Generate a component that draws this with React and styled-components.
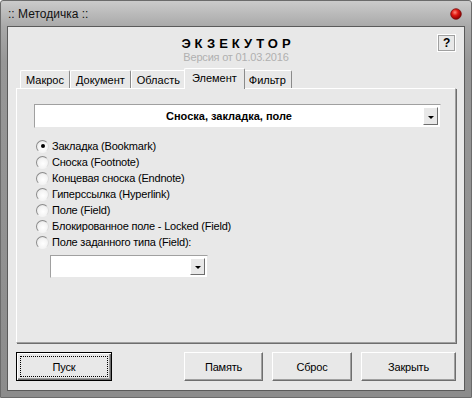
import React from 'react';
import styled, { createGlobalStyle } from 'styled-components';

const GlobalStyle = createGlobalStyle`
  html, body {
    margin: 0;
    padding: 0;
    background: #ffffff;
  }
  body {
    font-family: "Liberation Sans", Arial, sans-serif;
    font-size: 11px;
    letter-spacing: -0.2px;
    color: #000;
  }
`;

const Window = styled.div`
  width: 472px;
  height: 398px;
  box-sizing: border-box;
  border: 1px solid #6b6b6b;
  border-radius: 3px 3px 0 0;
  padding: 0 6px 6px 6px;
  background: linear-gradient(#cbcbcb 0px, #a8a8a8 26px, #979797 60px, #8c8c8c 100%);
  display: flex;
  flex-direction: column;
`;

const TitleBar = styled.div`
  height: 25px;
  display: flex;
  align-items: center;
  justify-content: space-between;
  padding: 0 3px 0 1px;
  font-size: 12px;
  letter-spacing: 0;
  color: #111;
`;

const CloseDot = () => (
  <svg width="12" height="12" viewBox="0 0 12 12">
    <defs>
      <radialGradient id="rd" cx="40%" cy="35%" r="65%">
        <stop offset="0%" stopColor="#ff8a7a" />
        <stop offset="45%" stopColor="#e01810" />
        <stop offset="100%" stopColor="#8a0000" />
      </radialGradient>
    </defs>
    <circle cx="6" cy="6" r="5.3" fill="url(#rd)" stroke="#7a1010" strokeWidth="0.8" />
  </svg>
);

const Client = styled.div`
  flex: 1;
  background: #e8e8e8;
  border: 1px solid #5a5a5a;
  padding: 0 8px 9px 8px;
  display: flex;
  flex-direction: column;
`;

const Header = styled.div`
  height: 39px;
  box-sizing: border-box;
  padding-top: 7px;
  display: grid;
  grid-template-columns: 19px 1fr 19px;
  align-items: start;
`;

const Brand = styled.div`
  grid-column: 2;
  margin-top: 2px;
  text-align: center;
`;

const BrandName = styled.div`
  font-size: 13px;
  font-weight: bold;
  line-height: 15px;
  letter-spacing: 4px;
  text-indent: 4px;
  color: #000;
`;

const Version = styled.div`
  font-size: 11px;
  line-height: 12px;
  color: #b0b0b0;
`;

const HelpButton = styled.div`
  grid-column: 3;
  width: 19px;
  height: 18px;
  box-sizing: border-box;
  border: 1px solid #ffffff;
  outline: 1px solid #a0a0a0;
  outline-offset: -2px;
  display: flex;
  align-items: center;
  justify-content: center;
  font-weight: bold;
  font-size: 12px;
  color: #000;
`;

const TabStrip = styled.div`
  height: 22px;
  display: flex;
  align-items: flex-end;
  padding-left: 4px;
  position: relative;
  z-index: 1;
`;

const Tab = styled.div`
  height: ${p => (p.$active ? '21px' : '18px')};
  box-sizing: border-box;
  padding: 0 ${p => (p.$active ? '7px' : '5px')};
  margin: 0 ${p => (p.$active ? '-2px' : '0')} ${p => (p.$active ? '-1px' : '0')};
  border-top: 1px solid #ffffff;
  border-left: 1px solid #ffffff;
  border-right: 1px solid #8a8a8a;
  border-radius: 2px 2px 0 0;
  background: #e8e8e8;
  letter-spacing: 0;
  display: flex;
  align-items: ${p => (p.$active ? 'flex-start' : 'center')};
  padding-top: ${p => (p.$active ? '3px' : '0')};
  position: relative;
  z-index: ${p => (p.$active ? 2 : 0)};
  white-space: nowrap;
`;

const Panel = styled.div`
  flex: 1;
  border-top: 1px solid #ffffff;
  border-left: 1px solid #ffffff;
  border-right: 1px solid #a0a0a0;
  border-bottom: 1px solid #a0a0a0;
  box-shadow: 1px 1px 0 #6e6e6e;
  padding: 15px 13px 0 17px;
  display: flex;
  flex-direction: column;
`;

const Combo = styled.div`
  width: ${p => p.$width};
  height: ${p => p.$height};
  box-sizing: border-box;
  background: #ffffff;
  border: 1px solid;
  border-color: #a0a0a0 #e8e8e8 #e8e8e8 #a0a0a0;
  padding: 1px;
  display: flex;
  align-items: stretch;
`;

const ComboText = styled.div`
  flex: 1;
  display: flex;
  align-items: center;
  justify-content: center;
  font-weight: bold;
  font-size: 11px;
  letter-spacing: 0;
`;

const DropButton = styled.div`
  width: 15px;
  box-sizing: border-box;
  margin: 1px;
  background: #e8e8e8;
  border: 1px solid;
  border-color: #ffffff #6e6e6e #6e6e6e #ffffff;
  display: flex;
  align-items: center;
  justify-content: center;
`;

const Arrow = styled.span`
  width: 0;
  height: 0;
  margin-top: 2px;
  border-left: 3px solid transparent;
  border-right: 3px solid transparent;
  border-top: 3px solid #000;
`;

const RadioList = styled.div`
  margin-top: 10px;
  padding-left: 2px;
  display: flex;
  flex-direction: column;
`;

const RadioRow = styled.div`
  height: 16px;
  display: flex;
  align-items: center;
  gap: 3px;
`;

const RadioCircle = styled.span`
  width: 13px;
  height: 13px;
  box-sizing: border-box;
  border-radius: 50%;
  border: 1px solid;
  border-color: #8a8a8a #dcdcdc #f4f4f4 #8a8a8a;
  background: radial-gradient(circle at 55% 60%, #ffffff 0%, #f3f3f3 55%, #d8d8d8 100%);
  display: flex;
  align-items: center;
  justify-content: center;
  &::after {
    content: '';
    width: 4px;
    height: 4px;
    border-radius: 50%;
    background: ${p => (p.$checked ? '#000' : 'transparent')};
  }
`;

const SubCombo = styled.div`
  margin-top: 5px;
  margin-left: 16px;
`;

const ButtonRow = styled.div`
  margin-top: 9px;
  height: 29px;
  display: flex;
  gap: 9px;
`;

const Button = styled.div`
  width: ${p => p.$width}px;
  box-sizing: border-box;
  background: #e8e8e8;
  border: 1px solid;
  border-color: #ffffff #6e6e6e #6e6e6e #ffffff;
  box-shadow: inset -1px -1px 0 #a0a0a0;
  display: flex;
  align-items: center;
  justify-content: center;
  margin-left: ${p => (p.$push ? 'auto' : '0')};
`;

const DefaultButton = styled(Button)`
  border: 1px solid #000;
  box-shadow: inset 1px 1px 0 #ffffff, inset -1px -1px 0 #6e6e6e, inset -2px -2px 0 #a0a0a0;
  padding: 3px;
`;

const FocusRect = styled.div`
  flex: 1;
  align-self: stretch;
  border: 1px dotted #000;
  display: flex;
  align-items: center;
  justify-content: center;
`;

const tabs = ['Макрос', 'Документ', 'Область', 'Элемент', 'Фильтр'];

const options = [
  'Закладка (Bookmark)',
  'Сноска (Footnote)',
  'Концевая сноска (Endnote)',
  'Гиперссылка (Hyperlink)',
  'Поле (Field)',
  'Блокированное поле - Locked (Field)',
  'Поле заданного типа (Field):',
];

export default function App() {
  return (
    <>
      <GlobalStyle />
      <Window>
        <TitleBar>
          <span>:: Методичка ::</span>
          <CloseDot />
        </TitleBar>
        <Client>
          <Header>
            <Brand>
              <BrandName>ЭКЗЕКУТОР</BrandName>
              <Version>Версия от 01.03.2016</Version>
            </Brand>
            <HelpButton>?</HelpButton>
          </Header>
          <TabStrip>
            {tabs.map(t => (
              <Tab key={t} $active={t === 'Элемент'}>{t}</Tab>
            ))}
          </TabStrip>
          <Panel>
            <Combo $width="407px" $height="24px">
              <ComboText>Сноска, закладка, поле</ComboText>
              <DropButton><Arrow /></DropButton>
            </Combo>
            <RadioList>
              {options.map((o, i) => (
                <RadioRow key={o}>
                  <RadioCircle $checked={i === 0} />
                  <span>{o}</span>
                </RadioRow>
              ))}
            </RadioList>
            <SubCombo>
              <Combo $width="158px" $height="23px">
                <ComboText />
                <DropButton><Arrow /></DropButton>
              </Combo>
            </SubCombo>
          </Panel>
          <ButtonRow>
            <DefaultButton $width={96}><FocusRect>Пуск</FocusRect></DefaultButton>
            <Button $width={79} $push>Память</Button>
            <Button $width={80}>Сброс</Button>
            <Button $width={95}>Закрыть</Button>
          </ButtonRow>
        </Client>
      </Window>
    </>
  );
}
